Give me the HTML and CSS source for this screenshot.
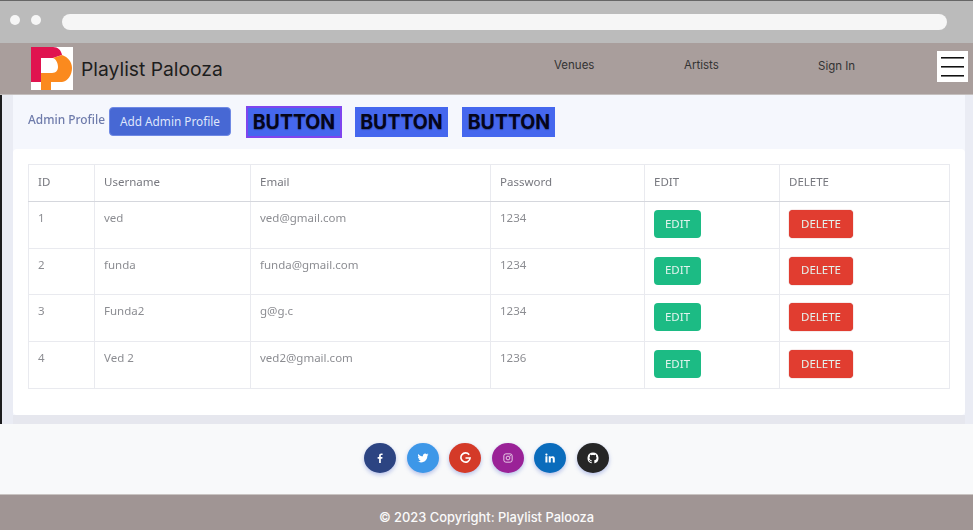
FILE: index.html
```html
<!DOCTYPE html>
<html lang="en">
<head>
    <meta charset="UTF-8">
    <meta name="viewport" content="width=device-width, initial-scale=1.0">
    <title>Playlist Palooza</title>
    <link rel="stylesheet" href="styles.css">
</head>
<body>
    <div class="browser-bar">
        <span class="dot"></span>
        <span class="dot"></span>
        <div class="url-bar"></div>
    </div>

    <nav class="navbar">
        <div class="brand">
            <svg class="logo" viewBox="0 0 42 43" width="42" height="43">
                <rect width="42" height="43" fill="#fff"/>
                <path d="M0 0H22C27 0 30 3 31 8L22 11H10V35H0Z" fill="#e0134f"/>
                <path d="M31 8C37 10 41 15 41 21C41 28 37 34 31 35H20V43H10V26H21C25 26 27 23 27 20C27 16 25 12 22 11Z" fill="#fb8a1e"/>
            </svg>
            <span class="brand-name">Playlist Palooza</span>
        </div>
        <a class="nav-link venues">Venues</a>
        <a class="nav-link artists">Artists</a>
        <a class="nav-link signin">Sign In</a>
        <div class="menu-btn"><span></span><span></span><span></span></div>
    </nav>

    <main class="content">
        <div class="toolbar">
            <span class="admin-label">Admin Profile</span>
            <button class="add-btn">Add Admin Profile</button>
            <button class="big-btn first">BUTTON</button>
            <button class="big-btn">BUTTON</button>
            <button class="big-btn">BUTTON</button>
        </div>
        <div class="card">
            <table>
                <thead>
                    <tr>
                        <th class="col-id">ID</th>
                        <th class="col-user">Username</th>
                        <th class="col-email">Email</th>
                        <th class="col-pass">Password</th>
                        <th class="col-edit">EDIT</th>
                        <th>DELETE</th>
                    </tr>
                </thead>
                <tbody>
                    <tr>
                        <td>1</td><td>ved</td><td>ved@gmail.com</td><td>1234</td>
                        <td><button class="edit-btn">EDIT</button></td>
                        <td><button class="delete-btn">DELETE</button></td>
                    </tr>
                    <tr>
                        <td>2</td><td>funda</td><td>funda@gmail.com</td><td>1234</td>
                        <td><button class="edit-btn">EDIT</button></td>
                        <td><button class="delete-btn">DELETE</button></td>
                    </tr>
                    <tr>
                        <td>3</td><td>Funda2</td><td>g@g.c</td><td>1234</td>
                        <td><button class="edit-btn">EDIT</button></td>
                        <td><button class="delete-btn">DELETE</button></td>
                    </tr>
                    <tr>
                        <td>4</td><td>Ved 2</td><td>ved2@gmail.com</td><td>1236</td>
                        <td><button class="edit-btn">EDIT</button></td>
                        <td><button class="delete-btn">DELETE</button></td>
                    </tr>
                </tbody>
            </table>
        </div>
    </main>

    <div class="social">
        <a class="social-btn facebook"><svg viewBox="0 0 24 24" width="10" height="10"><path fill="#fff" d="M14 24V13.500H17.500L18 9.500H14V7C14 5.800 14.400 5 16 5H18.200V1.300C17.800 1.200 16.500 1 15.200 1C12 1 9.800 3 9.800 6.500V9.500H6.300V13.500H9.800V24Z"/></svg></a>
        <a class="social-btn twitter"><svg viewBox="0 0 24 24" width="12" height="12"><path fill="#fff" d="M23 5.100C22.200 5.500 21.300 5.700 20.400 5.800C21.400 5.200 22.100 4.300 22.400 3.200C21.500 3.700 20.500 4.100 19.500 4.300C17.700 2.400 14.700 2.500 13 4.300C11.900 5.400 11.500 7 11.800 8.500C8.200 8.300 4.800 6.600 2.500 3.800C1.300 5.800 1.900 8.500 3.900 9.800C3.200 9.800 2.500 9.600 1.900 9.300C1.900 11.400 3.400 13.300 5.500 13.700C4.800 13.900 4.100 13.900 3.500 13.800C4.100 15.600 5.800 16.900 7.700 16.900C5.900 18.300 3.500 19 1 18.700C3.100 20 5.500 20.800 8 20.800C16.300 20.800 21 13.800 20.700 7.400C21.600 6.800 22.400 6 23 5.100Z"/></svg></a>
        <a class="social-btn google"><svg viewBox="0 0 24 24" width="11" height="11"><path fill="none" stroke="#fff" stroke-width="3.600" d="M20 6A10 10 0 1 0 22 13H12"/></svg></a>
        <a class="social-btn instagram"><svg viewBox="0 0 24 24" width="10" height="10" fill="none" stroke="#fff" stroke-width="1.800"><rect x="2" y="2" width="20" height="20" rx="5"/><circle cx="12" cy="12" r="4.500"/><circle cx="17.500" cy="6.500" r="0.600"/></svg></a>
        <a class="social-btn linkedin"><svg viewBox="0 0 24 24" width="10" height="10"><path fill="#fff" d="M1 8H5.800V23H1ZM3.400 1A2.700 2.700 0 1 1 3.400 6.400A2.700 2.700 0 0 1 3.400 1ZM9 8H13.600V10C14.400 8.700 16 7.600 18.200 7.600C22.600 7.600 23.500 10.500 23.500 14.500V23H18.700V15.500C18.700 13.700 18.600 11.700 16.400 11.700C14.200 11.700 13.800 13.400 13.800 15.400V23H9Z"/></svg></a>
        <a class="social-btn github"><svg viewBox="0 0 24 24" width="12" height="12"><path fill="#fff" d="M12 1A11 11 0 0 0 8.500 22.400C9.100 22.500 9.300 22.200 9.300 21.900V19.900C6.200 20.600 5.600 18.500 5.600 18.500C5.100 17.200 4.400 16.900 4.400 16.900C3.400 16.200 4.500 16.200 4.500 16.200C5.600 16.300 6.200 17.400 6.200 17.400C7.200 19.100 8.800 18.600 9.400 18.300C9.500 17.600 9.800 17.100 10.100 16.800C7.600 16.500 5 15.600 5 11.400C5 10.200 5.400 9.200 6.100 8.400C6 8.100 5.600 7 6.200 5.500C6.200 5.500 7.200 5.200 9.300 6.600C10.200 6.400 11.100 6.200 12 6.200C12.900 6.200 13.800 6.400 14.700 6.600C16.800 5.200 17.800 5.500 17.800 5.500C18.400 7 18 8.100 17.900 8.400C18.600 9.200 19 10.200 19 11.400C19 15.600 16.400 16.500 13.900 16.800C14.300 17.200 14.700 17.800 14.700 18.900V21.900C14.700 22.200 14.900 22.500 15.500 22.400A11 11 0 0 0 12 1Z"/></svg></a>
    </div>

    <footer class="footer">© 2023 Copyright: Playlist Palooza</footer>
</body>
</html>
```

FILE: styles.css
```css
* {
    box-sizing: border-box;
}

html, body {
    height: 100%;
}

body {
    margin: 0;
    overflow: hidden;
    font-family: Inter, "Liberation Sans", sans-serif;
    background-color: #f8f9fa;
}

.browser-bar {
    display: flex;
    align-items: center;
    height: 43px;
    padding: 0 26px 5px 10px;
    background-color: #bbbbbb;
    border-top: 1px solid #666;
}

.dot {
    width: 10px;
    height: 10px;
    margin-right: 11px;
    border-radius: 50%;
    background-color: #f6f6f6;
}

.url-bar {
    flex: 1;
    height: 16px;
    margin-top: 4px;
    margin-left: 10px;
    border-radius: 8px;
    background-color: #f6f6f6;
}

.navbar {
    display: flex;
    align-items: center;
    height: 52px;
    background-color: #a99e9c;
    border-bottom: 1px solid #c4bfbe;
}

.brand {
    display: flex;
    align-items: center;
    width: 554px;
    padding-left: 31px;
}

.logo {
    flex: none;
}

.brand-name {
    margin-left: 8px;
    font-size: 19.300px;
    color: #1d1d1d;
}

.nav-link {
    font-size: 11.500px;
    color: #333;
}

.venues {
    width: 130px;
    margin-bottom: 7px;
}

.artists {
    width: 134px;
    margin-bottom: 7px;
}

.signin {
    width: 119px;
    margin-bottom: 5px;
}

.menu-btn {
    display: flex;
    flex-direction: column;
    justify-content: space-between;
    width: 31px;
    height: 31px;
    margin-bottom: 5px;
    padding: 6px 4px;
    background-color: #fff;
}

.menu-btn span {
    height: 1px;
    background-color: #111;
    box-shadow: 0 1px 0 #777;
}

.content {
    height: 329px;
    padding: 0 8px 9px 11px;
    background-color: #f5f7fd;
    border-left: 2px solid #1c1c1e;
    box-shadow: inset 11px 0 0 #eaecf4, inset -8px 0 0 #eaecf4, inset 0 -9px 0 #e6e7ee;
}

.toolbar {
    display: flex;
    align-items: center;
    height: 54px;
    padding-left: 15px;
}

.admin-label {
    margin-bottom: 7px;
    font-family: "Noto Sans", sans-serif;
    font-size: 11.900px;
    font-weight: 500;
    color: #6e7bab;
    filter: blur(0.3px);
}

.add-btn {
    width: 122px;
    height: 29px;
    margin-bottom: 2px;
    margin-left: 4px;
    margin-right: 15px;
    padding: 0;
    border: 1px solid #6f89e4;
    border-radius: 4px;
    background-color: #4768d4;
    color: #dfe6fb;
    font-family: "Noto Sans", sans-serif;
    font-size: 11.800px;
}

.big-btn {
    width: 93px;
    height: 30px;
    margin-right: 14.500px;
    padding: 0;
    border: 0;
    background-color: #4567ee;
    color: #05051a;
    font-family: Inter, sans-serif;
    font-size: 19.500px;
    font-weight: 700;
    text-shadow: 0 1px 1px rgba(0, 0, 0, 0.3);
}

.big-btn.first {
    width: 96px;
    height: 32px;
    margin-right: 13px;
    border: 2px solid #7f45ee;
}

.card {
    height: 266px;
    padding: 15px;
    background-color: #fff;
    border-radius: 4px;
}

table {
    width: 100%;
    border-collapse: collapse;
    table-layout: fixed;
    font-family: "Noto Sans", sans-serif;
    font-size: 11.500px;
    color: #8c8d92;
    filter: blur(0.4px);
}

th, td {
    padding: 0 9px;
    border: 1px solid #e9eaef;
    text-align: left;
    font-weight: 400;
}

thead tr {
    height: 37px;
}

th {
    padding-bottom: 3px;
    border-bottom: 1px solid #d5d7dd;
    color: #77787f;
}

tbody tr {
    height: 46.700px;
}

td {
    padding-top: 8px;
    padding-bottom: 8px;
    vertical-align: top;
}

.col-id {
    width: 66px;
}

.col-user {
    width: 156px;
}

.col-email {
    width: 240px;
}

.col-pass {
    width: 154px;
}

.col-edit {
    width: 135px;
}

.edit-btn, .delete-btn {
    display: block;
    height: 28px;
    padding: 0 0 2px;
    border: 0;
    border-radius: 4px;
    color: #e3f3ee;
    font-family: "Noto Sans", sans-serif;
    font-size: 11.500px;
}

.edit-btn {
    width: 47px;
    background-color: #1cbb84;
}

.delete-btn {
    width: 64px;
    background-color: #e13d30;
    box-shadow: 0 0 1px #a33;
}

.social {
    display: flex;
    justify-content: center;
    align-items: center;
    gap: 10.500px;
    height: 70px;
    padding-bottom: 3px;
}

.social-btn {
    display: flex;
    justify-content: center;
    align-items: center;
    width: 32px;
    height: 30px;
    border-radius: 50%;
    box-shadow: 0 2px 4px rgba(60, 90, 200, 0.35);
}

.facebook {
    background-color: #2c4482;
}

.twitter {
    background-color: #3d97e8;
}

.google {
    background-color: #d43a28;
}

.instagram {
    background-color: #9a2297;
}

.linkedin {
    background-color: #0a6cbc;
}

.github {
    background-color: #262626;
}

.footer {
    height: 36px;
    padding-top: 15px;
    background-color: #a09594;
    border-top: 1px solid #c9c4c2;
    color: #fafafa;
    font-size: 12.900px;
    font-weight: 500;
    text-align: center;
}
```
